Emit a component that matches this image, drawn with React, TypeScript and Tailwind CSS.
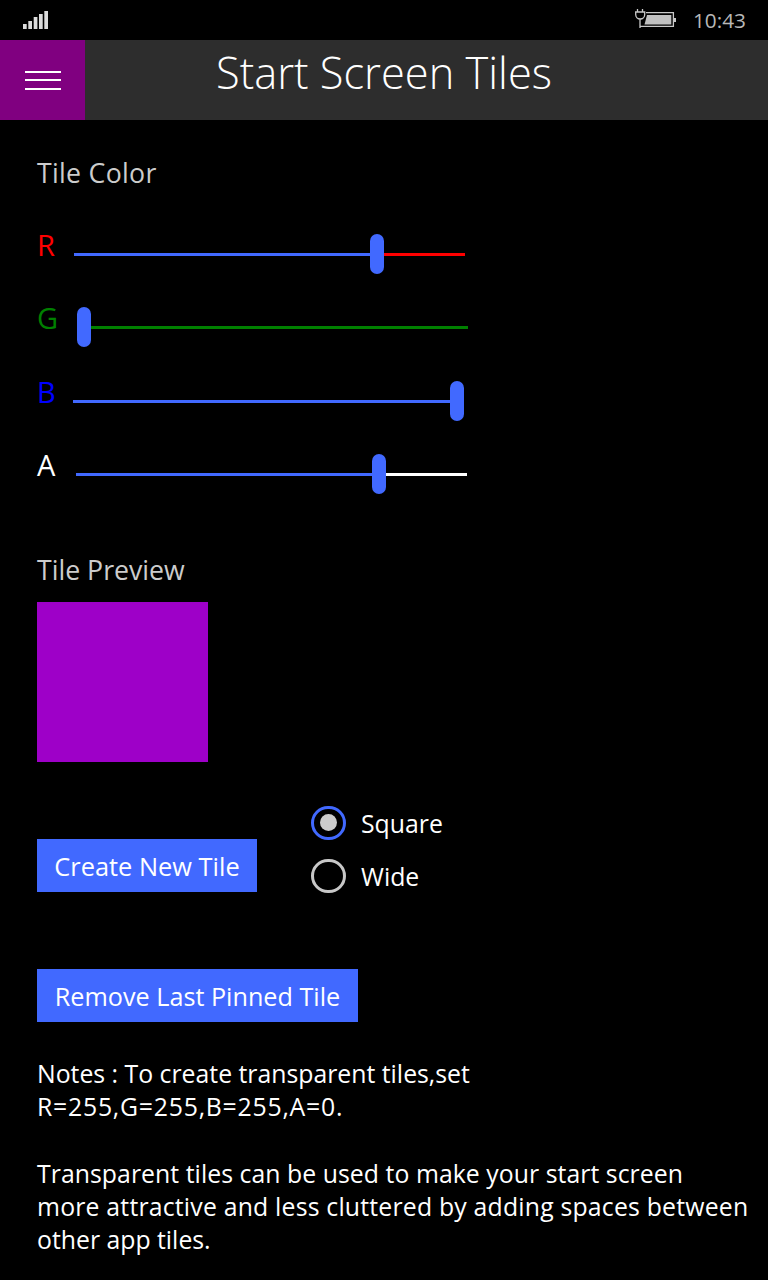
import React from "react";

function Slider({ label, labelClass, rowClass, offsetClass, thumbClass, fillClass, restClass }: { label: string; labelClass: string; rowClass: string; offsetClass: string; thumbClass: string; fillClass: string; restClass: string }) {
  return (
    <div className={`flex items-start ${rowClass}`}>
      <div className={`w-[37px] text-[29px] leading-[36px] ${labelClass}`}>{label}</div>
      <div className={`relative flex h-[3px] mt-[26px] ${offsetClass}`}>
        <div className={`h-[3px] bg-[#4169ff] ${fillClass}`} />
        <div className={`h-[3px] ${restClass}`} />
        <div className={`absolute top-[-19px] w-[14px] h-[40px] rounded-[7px] bg-[#4169ff] ${thumbClass}`} />
      </div>
    </div>
  );
}

function Radio({ checked, label }: { checked: boolean; label: string }) {
  return (
    <div className="flex items-center h-[53px]">
      <div className={`w-[35px] h-[34px] rounded-full border-[3px] flex items-center justify-center ${checked ? "border-[#4169ff]" : "border-[#c8c8c8]"}`}>
        {checked && <div className="w-[17px] h-[17px] rounded-full bg-[#cccccc]" />}
      </div>
      <span className="ml-[15px] text-[24.8px] text-white leading-[34px]">{label}</span>
    </div>
  );
}

export default function App() {
  return (
    <div className="w-[768px] h-[1280px] bg-black overflow-hidden text-white font-['Open_Sans','Noto_Sans',sans-serif]">
      <div className="h-[40px] flex items-center justify-between pl-[23px] pr-[22px]">
        <svg width="26" height="20" viewBox="0 0 26 20" className="mt-[1px]">
          <g fill="#dcdcdc">
            <rect x="0" y="13" width="3.7" height="5" />
            <rect x="5.3" y="10" width="3.7" height="8" />
            <rect x="10.7" y="6" width="3.7" height="12" />
            <rect x="16" y="3" width="3.7" height="15" />
            <rect x="21.3" y="0" width="3.7" height="18" />
          </g>
        </svg>
        <div className="flex items-center">
          <svg width="42" height="22" viewBox="0 0 42 22" className="mr-[16px]">
            <path d="M2.5 0v3M7.5 0v3M0.7 3h9v2.5c0 2.5-2 4.5-4.5 4.5S0.7 8 0.7 5.5zM5 10v9" fill="none" stroke="#c8c8c8" strokeWidth="1.3" />
            <path d="M11 3.6H38.4V17.4H5" fill="none" stroke="#c8c8c8" strokeWidth="1.3" />
            <path d="M12 6H36.3V15.5H9.5z" fill="#c0c0c0" />
            <rect x="39" y="9" width="2" height="4" fill="#c8c8c8" />
          </svg>
          <span className="text-[20.8px] text-[#b8b8b8] leading-[28px]">10:43</span>
        </div>
      </div>

      <div className="relative h-[80px] bg-[#2d2d2d] flex items-start justify-center">
        <div className="absolute left-0 top-0 w-[85px] h-[80px] bg-[#800080] flex flex-col items-center justify-center gap-[6.5px]">
          <div className="w-[36px] h-[2px] bg-white" />
          <div className="w-[36px] h-[2px] bg-white" />
          <div className="w-[36px] h-[2px] bg-white" />
        </div>
        <h1 className="text-[43.4px] font-light leading-[66px] text-white">Start Screen Tiles</h1>
      </div>

      <div className="pl-[37px]">
        <div className="mt-[35px] h-[36px] text-[26.7px] leading-[36px] tracking-[0.3px] text-[#cccccc]">Tile Color</div>
        <div className="mt-[36px]">
          <Slider label="R" labelClass="text-[#ff0000]" rowClass="h-[73px]" offsetClass="" thumbClass="left-[296px]" fillClass="w-[300px]" restClass="w-[91px] bg-[#ff0000]" />
          <Slider label="G" labelClass="text-[#008000]" rowClass="h-[74px]" offsetClass="ml-[3px]" thumbClass="left-[0px]" fillClass="w-[5px]" restClass="w-[386px] bg-[#008000]" />
          <Slider label="B" labelClass="text-[#0000ff]" rowClass="h-[73px]" offsetClass="ml-[-1px]" thumbClass="left-[377px]" fillClass="w-[380px]" restClass="w-[11px] bg-[#4169ff]" />
          <Slider label="A" labelClass="text-white" rowClass="h-[72px]" offsetClass="ml-[2px]" thumbClass="left-[296px]" fillClass="w-[302px]" restClass="w-[89px] bg-white" />
        </div>

        <div className="mt-[33px] h-[36px] text-[26.7px] leading-[36px] text-[#cccccc]">Tile Preview</div>
        <div className="mt-[14px] w-[171px] h-[160px] bg-[#9e00c8]" />

        <div className="mt-[34px] flex items-start">
          <button className="mt-[43px] w-[220px] h-[53px] bg-[#4169ff] text-[25.4px] text-white leading-[34px]">Create New Tile</button>
          <div className="ml-[54px] flex flex-col">
            <Radio checked label="Square" />
            <Radio checked={false} label="Wide" />
          </div>
        </div>

        <button className="mt-[67px] block w-[321px] h-[53px] bg-[#4169ff] text-[25.2px] text-white leading-[34px]">Remove Last Pinned Tile</button>

        <div className="mt-[35px] text-[24.8px] leading-[33.3px] text-white whitespace-nowrap">
          <p>Notes : To create transparent tiles,set<br /><span className="tracking-[0.77px]">R=255,G=255,B=255,A=0.</span></p>
          <p className="mt-[33.3px]"><span className="tracking-[0.05px]">Transparent tiles can be used to make your start screen</span><br /><span className="tracking-[0.2px]">more attractive and less cluttered by adding spaces between</span><br />other app tiles.</p>
        </div>
      </div>
    </div>
  );
}
